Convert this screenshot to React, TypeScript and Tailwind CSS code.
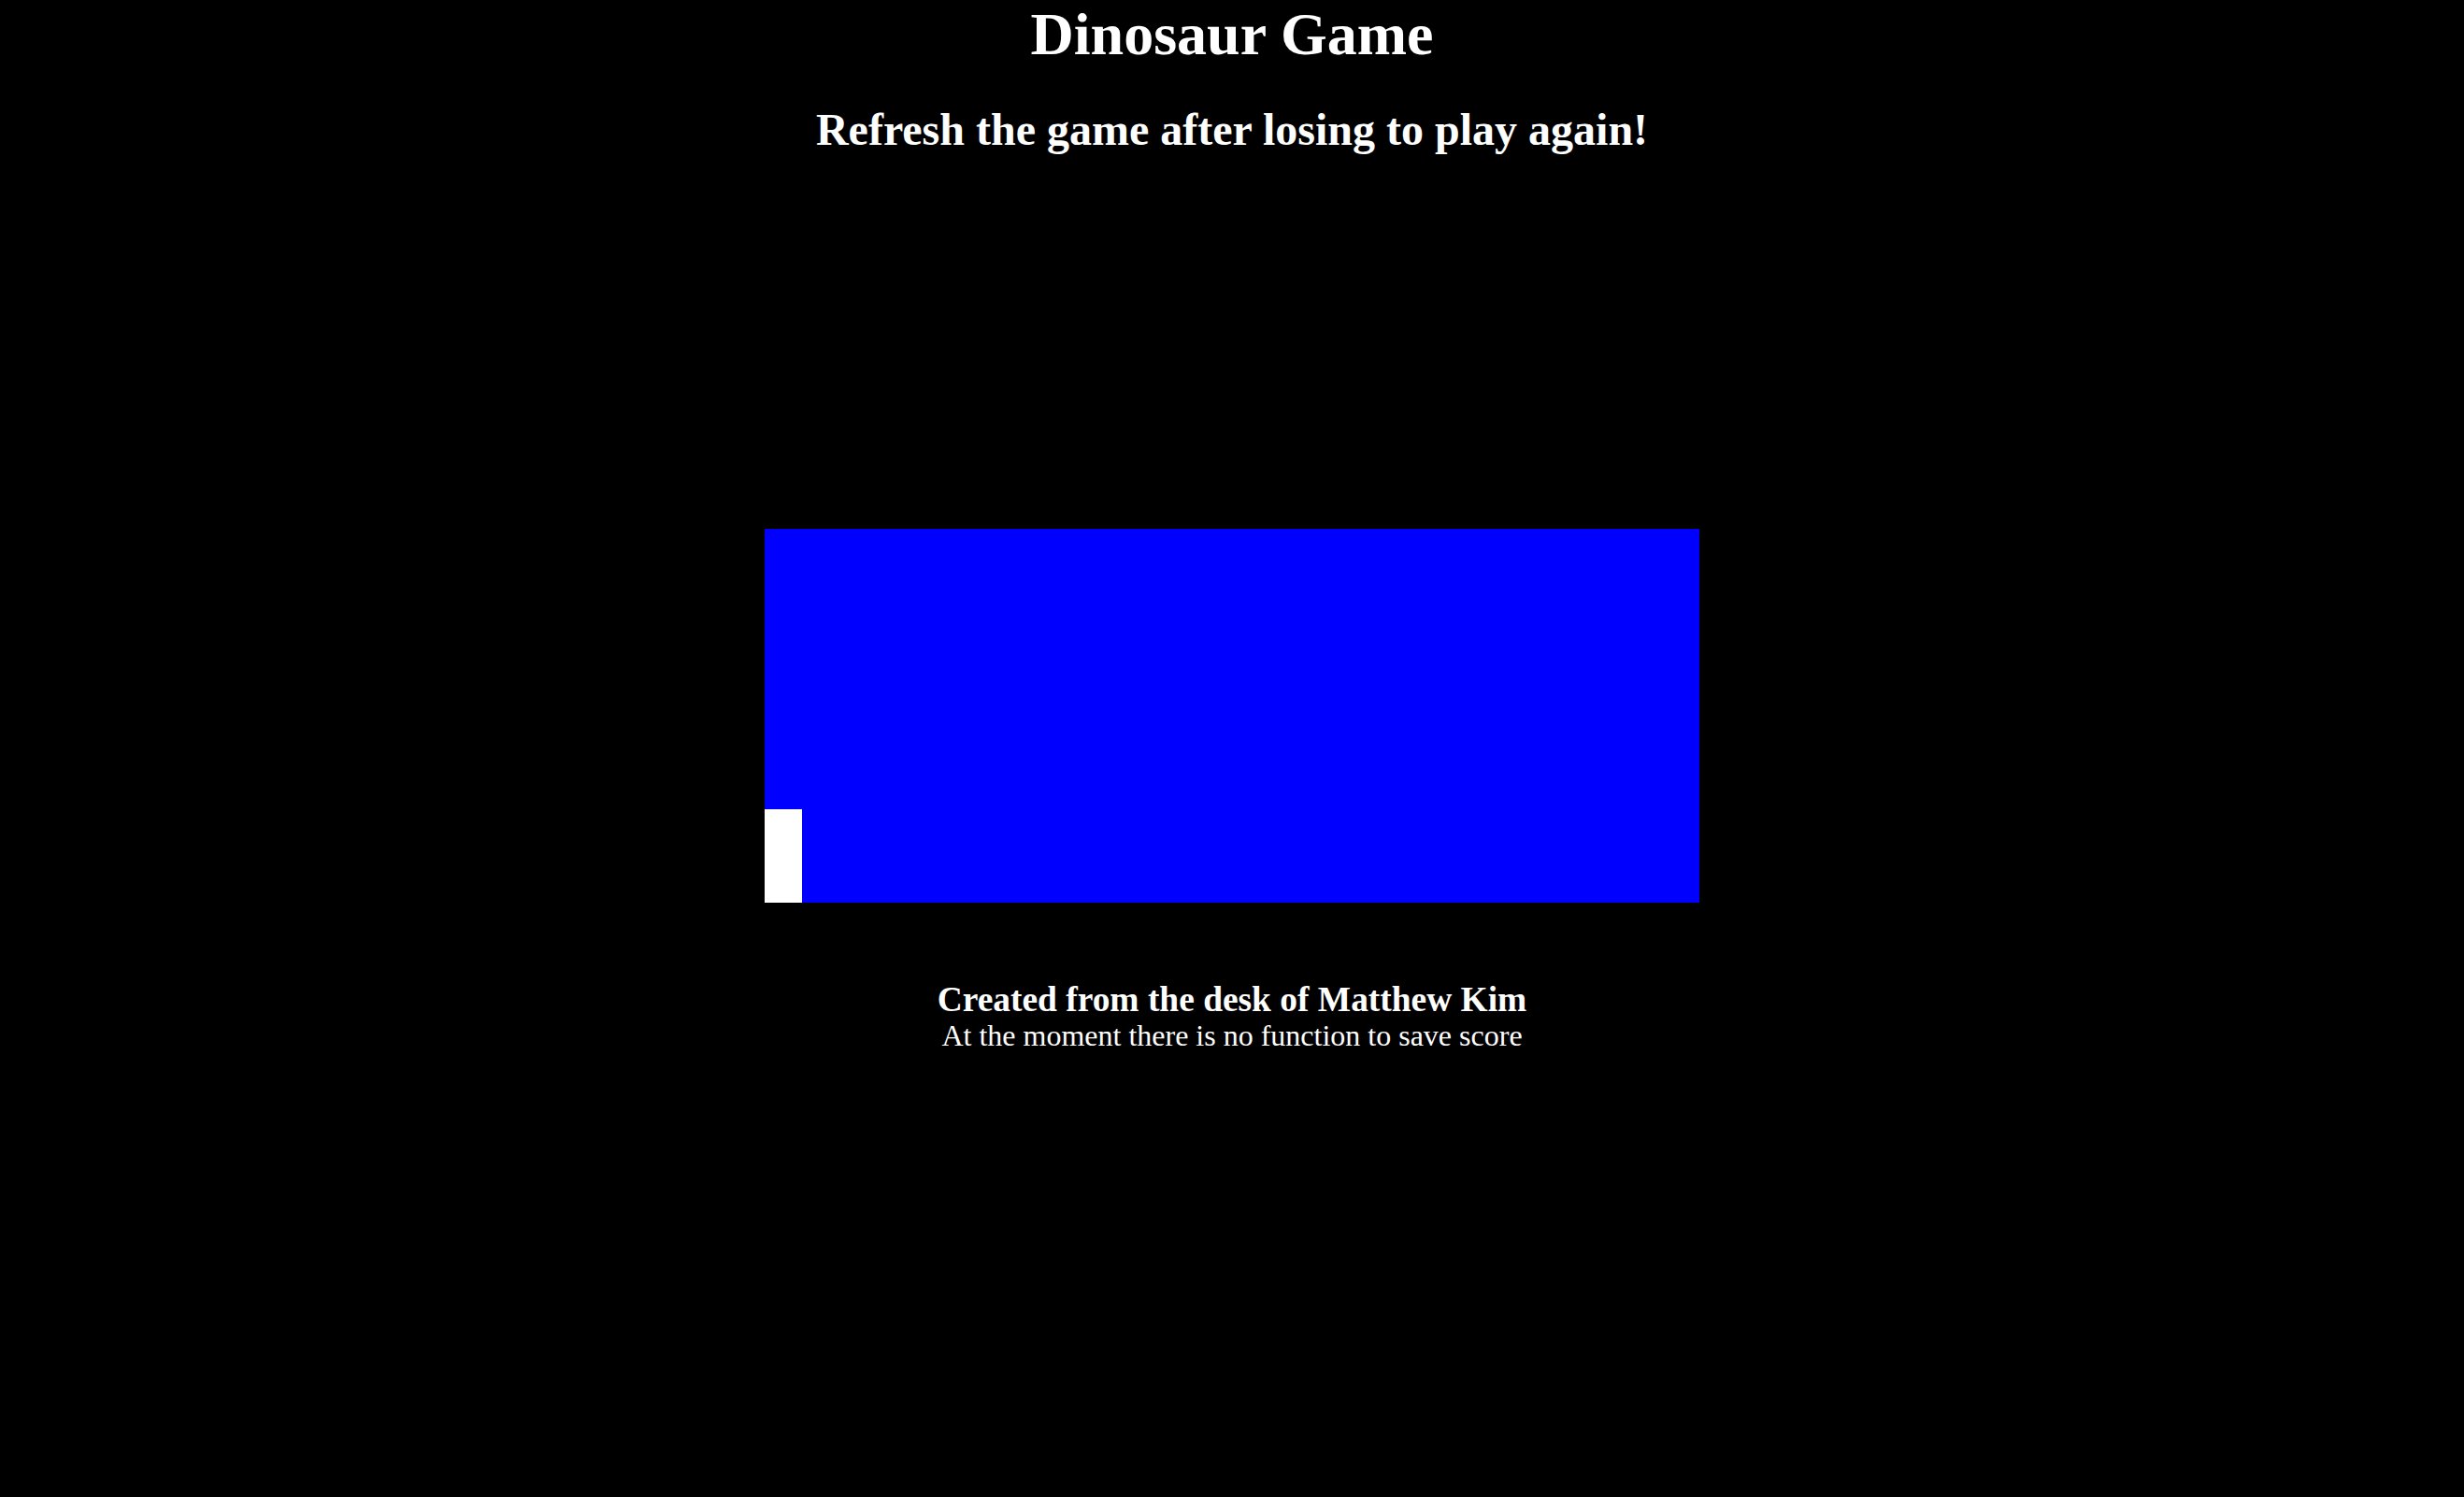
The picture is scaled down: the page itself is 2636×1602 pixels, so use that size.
export default function App() {
  return (
    <div
      className="min-h-screen w-full bg-black text-white flex flex-col items-center text-center"
      style={{ fontFamily: '"Liberation Serif", "Times New Roman", serif' }}
    >
      <h1 className="mt-[1px] text-[64px] font-bold leading-[71px]">Dinosaur Game</h1>
      <h2 className="mt-[40px] text-[48px] font-bold leading-[53px]">
        Refresh the game after losing to play again!
      </h2>
      <div className="mt-[401px] flex h-[400px] w-[1000px] items-end bg-[#0000ff]">
        <div className="h-[100px] w-[40px] bg-white" />
      </div>
      <h3 className="mt-[83px] text-[37.44px] font-bold leading-[41px]">
        Created from the desk of Matthew Kim
      </h3>
      <p className="mt-[1px] text-[32px] leading-[35px]">At the moment there is no function to save score</p>
    </div>
  );
}
